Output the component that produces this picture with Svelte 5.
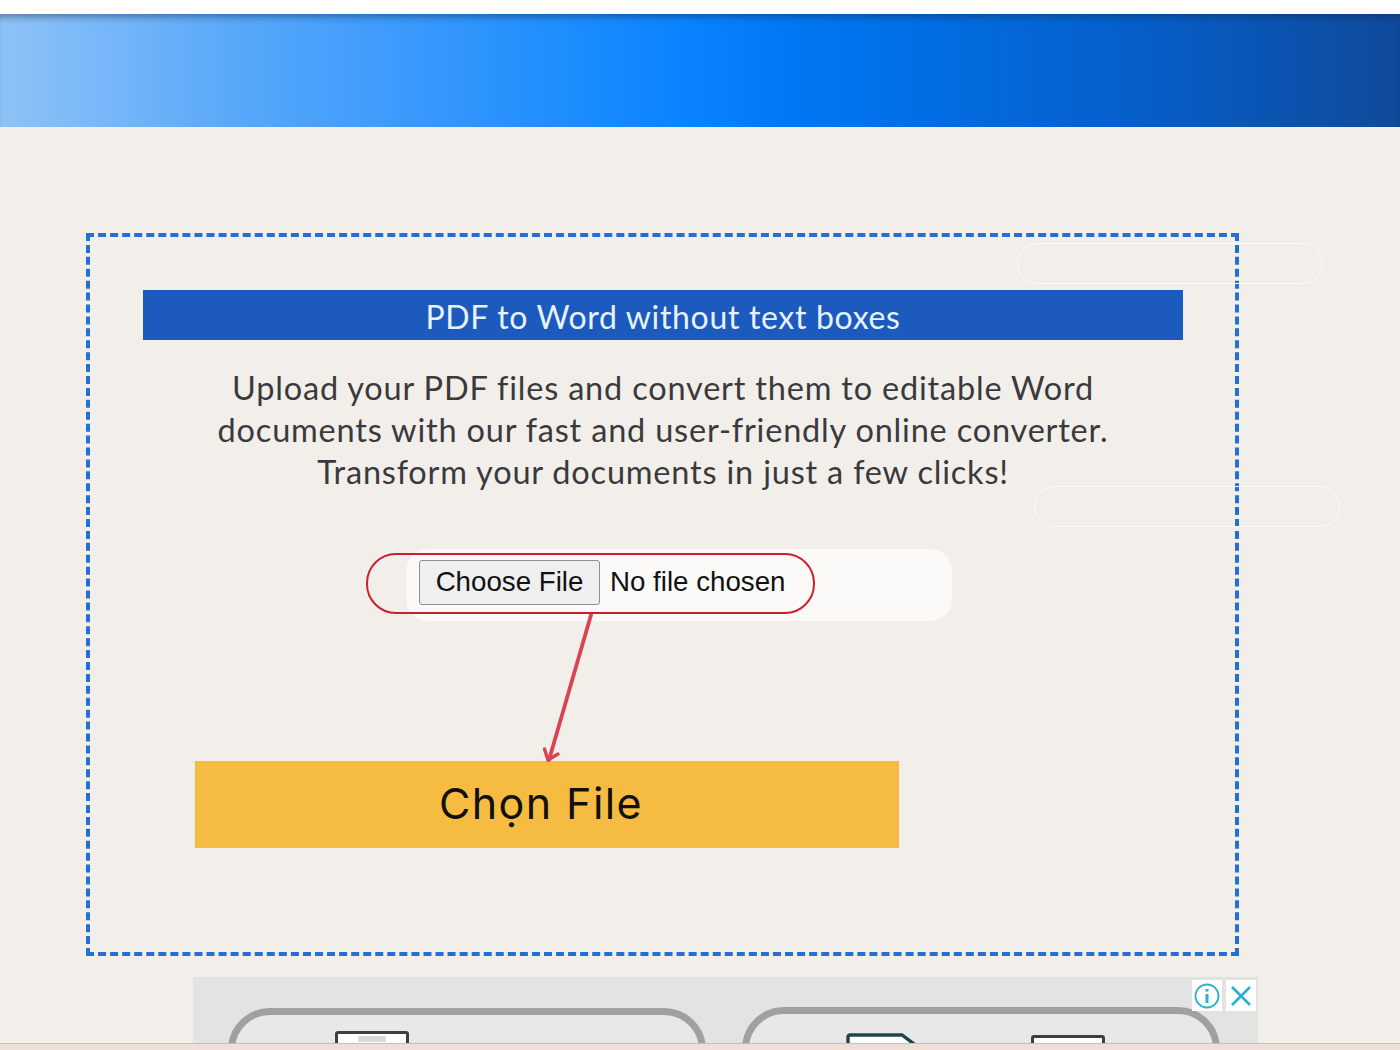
<script>
  let title = "PDF to Word without text boxes";
  let lines = [
    "Upload your PDF files and convert them to editable Word",
    "documents with our fast and user-friendly online converter.",
    "Transform your documents in just a few clicks!"
  ];
</script>

<div class="page">
  <div class="topbar"></div>

  <section class="panel">
    <h1 class="title">{title}</h1>
    <p class="intro">
      {#each lines as line}
        <span>{line}</span>
      {/each}
    </p>

    <div class="picker">
      <input type="file" />
    </div>

    <button class="choose">Chọn File</button>

    <div class="ring"></div>
    <svg class="arrow" width="60" height="150" viewBox="0 0 60 150" fill="none" stroke="#dc4352" stroke-linecap="round" stroke-linejoin="round">
      <path d="M48 1 L6 146" stroke-width="3.8" />
      <path d="M1.5 135 L5 146 L15 140" stroke-width="3.4" />
    </svg>
    <div class="ghost ghost-a"></div>
    <div class="ghost ghost-b"></div>
  </section>

  <div class="ad">
    <div class="device">
      <div class="thumb thumb-left"><i></i></div>
    </div>
    <div class="device device-b">
      <svg class="doc" width="76" height="20" viewBox="0 0 76 20" fill="#fff" stroke="#1f4450" stroke-width="3.4">
        <path d="M2 20 V4 Q2 2 4 2 H56 L72 14" />
      </svg>
      <div class="thumb thumb-right"></div>
    </div>
    <div class="adchoices">
      <span class="badge">
        <svg width="28" height="28" viewBox="0 0 28 28" fill="none" stroke="#2bb0cf">
          <circle cx="14" cy="14" r="11.5" stroke-width="1.8" />
          <path d="M14 12 V21" stroke-width="3" />
          <path d="M14 7 V9.6" stroke-width="3" />
        </svg>
      </span>
      <span class="badge">
        <svg width="24" height="24" viewBox="0 0 24 24" fill="none" stroke="#2bb0cf" stroke-width="2.6">
          <path d="M3 3 L21 21 M21 3 L3 21" />
        </svg>
      </span>
    </div>
  </div>

  <div class="footer-edge"></div>
</div>

<style>
  :global(body) {
    margin: 0;
    background: #f2efeb;
  }

  .page {
    width: 1400px;
    height: 1050px;
    overflow: hidden;
    box-sizing: border-box;
    border-top: 14px solid #fff;
    background: #f2efeb;
  }

  .topbar {
    height: 113px;
    background: linear-gradient(90deg, #8fc3f7 0, #57a7fa 240px, #0a84ff 680px, #0077f2 800px, #0560cc 1120px, #0f4a9c 1400px);
    box-shadow: inset 0 7px 7px -4px rgba(20, 40, 70, 0.45);
  }

  .panel {
    position: relative;
    box-sizing: border-box;
    width: 1153px;
    height: 723px;
    margin: 106px 0 0 86px;
    padding: 53px 52px 0 53px;
    border: 4px dashed #2070d6;
  }

  .title {
    margin: 0;
    height: 50px;
    background: #1c5bbd;
    color: #e9f1fb;
    text-align: center;
    letter-spacing: 0.67px;
    font: 400 32px/54px Lato, sans-serif;
  }

  .intro {
    margin: 27px 0 0;
    text-align: center;
    color: #3a3a3c;
    letter-spacing: 0.8px;
    font: 400 32.5px/42px Lato, sans-serif;
  }

  .intro span {
    display: block;
  }

  .picker {
    box-sizing: border-box;
    width: 546px;
    height: 72px;
    margin: 56px 0 0 263px;
    padding: 11px 0 0 13px;
    border-radius: 22px;
    background: #fbfaf8;
  }

  input[type="file"] {
    display: block;
    width: 500px;
    font: 27.7px "Liberation Sans", Arial, sans-serif;
    color: #111;
  }

  input[type="file"]::file-selector-button {
    box-sizing: border-box;
    width: 181px;
    height: 45px;
    margin-right: 10px;
    padding: 0 0 2px;
    border: 1.5px solid #8f8f8f;
    border-radius: 3px;
    background: #efefef;
    color: #111;
    font: 27.7px "Liberation Sans", Arial, sans-serif;
  }

  .choose {
    display: block;
    box-sizing: border-box;
    width: 704px;
    height: 87px;
    margin: 140px 0 0 52px;
    padding: 0 12px 4px 0;
    border: 0;
    background: #f6bc41;
    color: #111;
    letter-spacing: 1.4px;
    font: 400 43px Inter, sans-serif;
    text-align: center;
  }

  .ring {
    position: absolute;
    left: 276px;
    top: 316px;
    box-sizing: border-box;
    width: 449px;
    height: 61px;
    border: 2px solid #c9202e;
    border-radius: 30px;
  }

  .arrow {
    position: absolute;
    left: 453px;
    top: 377px;
  }

  .ghost {
    position: absolute;
    box-sizing: border-box;
    width: 306px;
    height: 41px;
    border: 1.6px solid #fbfbfa;
    border-radius: 21px;
  }

  .ghost-a {
    left: 927px;
    top: 6px;
  }

  .ghost-b {
    left: 944px;
    top: 249px;
  }

  .ad {
    position: relative;
    display: flex;
    gap: 36px;
    box-sizing: border-box;
    width: 1065px;
    height: 66px;
    margin: 21px 0 0 193px;
    padding: 31px 0 0 35px;
    overflow: hidden;
    background: #e3e3e3;
  }

  .device {
    position: relative;
    box-sizing: border-box;
    flex: none;
    width: 478px;
    height: 120px;
    border: 7px solid #a0a0a0;
    border-radius: 42px;
    background: #e8e8e9;
  }

  .device-b {
    margin-top: -1px;
  }

  .thumb {
    position: absolute;
    top: 16px;
    width: 74px;
    height: 40px;
    box-sizing: border-box;
    border: 3px solid #3f3f3f;
    border-radius: 3px;
    background: #fff;
  }

  .thumb i {
    display: block;
    width: 28px;
    height: 6px;
    margin: 2px auto 0;
    background: #d8d8d8;
  }

  .thumb-left {
    left: 100px;
  }

  .doc {
    position: absolute;
    left: 97px;
    top: 19px;
  }

  .thumb-right {
    left: 282px;
    top: 21px;
  }

  .adchoices {
    position: absolute;
    top: 3px;
    right: 2px;
    display: flex;
    gap: 4px;
  }

  .badge {
    display: flex;
    align-items: center;
    justify-content: center;
    height: 31px;
    width: 30px;
    background: #fff;
  }

  .footer-edge {
    box-sizing: border-box;
    height: 8px;
    background: #eee0d8;
    border-top: 1px solid #c9bdb6;
  }
</style>
